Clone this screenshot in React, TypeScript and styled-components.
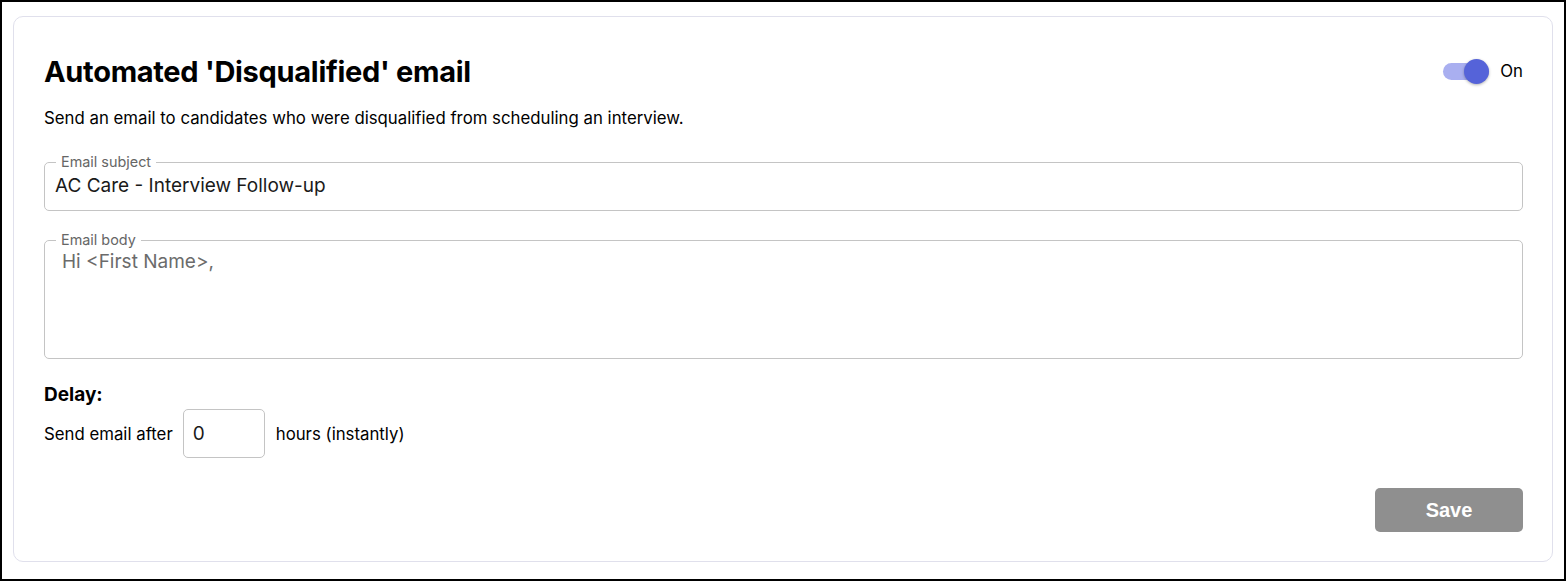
import React, { useState } from 'react'
import styled, { createGlobalStyle } from 'styled-components'

const GlobalStyle = createGlobalStyle`
	* {
		box-sizing: border-box;
	}
	body {
		margin: 0;
		font-family: Inter, 'Liberation Sans', sans-serif;
		color: #000;
		background: #fff;
	}
`

const Frame = styled.div`
	width: 1566px;
	height: 581px;
	border: 2px solid #000;
	padding: 14px 11px 17px 11px;
`

const Card = styled.section`
	height: 100%;
	border: 1px solid #e0e0ec;
	border-radius: 10px;
	padding: 30px 29px 29px 30px;
	display: flex;
	flex-direction: column;
`

const Header = styled.div`
	display: flex;
	align-items: center;
	justify-content: space-between;
	height: 48px;
`

const Title = styled.h2`
	margin: 0;
	font-size: 29px;
	font-weight: 700;
	letter-spacing: -0.3px;
`

const ToggleWrap = styled.label`
	display: flex;
	align-items: center;
	gap: 11px;
	font-size: 16.8px;
	cursor: pointer;
`

const Track = styled.span<{ $on: boolean }>`
	position: relative;
	width: 46px;
	height: 17px;
	border-radius: 9px;
	background: ${(p) => (p.$on ? '#a9aff0' : '#c4c4c4')};
`

const Thumb = styled.span<{ $on: boolean }>`
	position: absolute;
	top: -4px;
	left: ${(p) => (p.$on ? '21px' : '-2px')};
	width: 25px;
	height: 25px;
	border-radius: 50%;
	background: ${(p) => (p.$on ? '#5563d9' : '#f5f5f5')};
	box-shadow: 0 1px 3px rgba(0, 0, 0, 0.3);
`

const Subtitle = styled.p`
	margin: 13px 0 0 0;
	font-size: 16.8px;
`

const Field = styled.fieldset<{ $height: number }>`
	margin: 0;
	padding: 0 10px;
	height: ${(p) => p.$height}px;
	border: 1px solid #c4c4c4;
	border-radius: 5px;
	display: flex;
	flex-direction: column;
`

const Legend = styled.legend`
	margin-left: 1px;
	padding: 0 5px;
	font-size: 14.4px;
	color: #666;
	line-height: 14px;
`

const FieldText = styled.div<{ $muted?: boolean }>`
	font-size: 19px;
	padding: ${(p) => (p.$muted ? '3px 7px' : '5px 0')};
	color: ${(p) => (p.$muted ? '#6b6b6b' : '#1a1a1a')};
`

const Fields = styled.div`
	margin-top: 27px;
	display: flex;
	flex-direction: column;
	gap: 22px;
`

const DelayTitle = styled.h3`
	margin: 24px 0 0 0;
	font-size: 19px;
	font-weight: 700;
`

const DelayRow = styled.div`
	margin-top: 3px;
	display: flex;
	align-items: center;
	gap: 10px;
	font-size: 16.8px;
`

const HoursInput = styled.div`
	width: 82px;
	height: 49px;
	margin-right: 1px;
	border: 1px solid #c4c4c4;
	border-radius: 5px;
	padding: 0 9px;
	display: flex;
	align-items: center;
	font-size: 19px;
	color: #1a1a1a;
`

const Footer = styled.div`
	margin-top: auto;
	display: flex;
	justify-content: flex-end;
`

const SaveButton = styled.button`
	width: 148px;
	height: 44px;
	border: none;
	border-radius: 5px;
	background: #8f8f8f;
	color: #fff;
	font-family: 'Liberation Sans', Arial, sans-serif;
	font-size: 20px;
	font-weight: 700;
`

const App = () => {
	const [enabled, setEnabled] = useState(true)

	return (
		<>
			<GlobalStyle />
			<Frame>
				<Card>
					<Header>
						<Title>Automated 'Disqualified' email</Title>
						<ToggleWrap onClick={() => setEnabled(!enabled)}>
							<Track $on={enabled}>
								<Thumb $on={enabled} />
							</Track>
							{enabled ? 'On' : 'Off'}
						</ToggleWrap>
					</Header>
					<Subtitle>
						Send an email to candidates who were disqualified from scheduling an interview.
					</Subtitle>
					<Fields>
						<Field $height={56}>
							<Legend>Email subject</Legend>
							<FieldText>AC Care - Interview Follow-up</FieldText>
						</Field>
						<Field $height={126}>
							<Legend>Email body</Legend>
							<FieldText $muted>Hi &lt;First Name&gt;,</FieldText>
						</Field>
					</Fields>
					<DelayTitle>Delay:</DelayTitle>
					<DelayRow>
						Send email after
						<HoursInput>0</HoursInput>
						hours (instantly)
					</DelayRow>
					<Footer>
						<SaveButton>Save</SaveButton>
					</Footer>
				</Card>
			</Frame>
		</>
	)
}

export default App
